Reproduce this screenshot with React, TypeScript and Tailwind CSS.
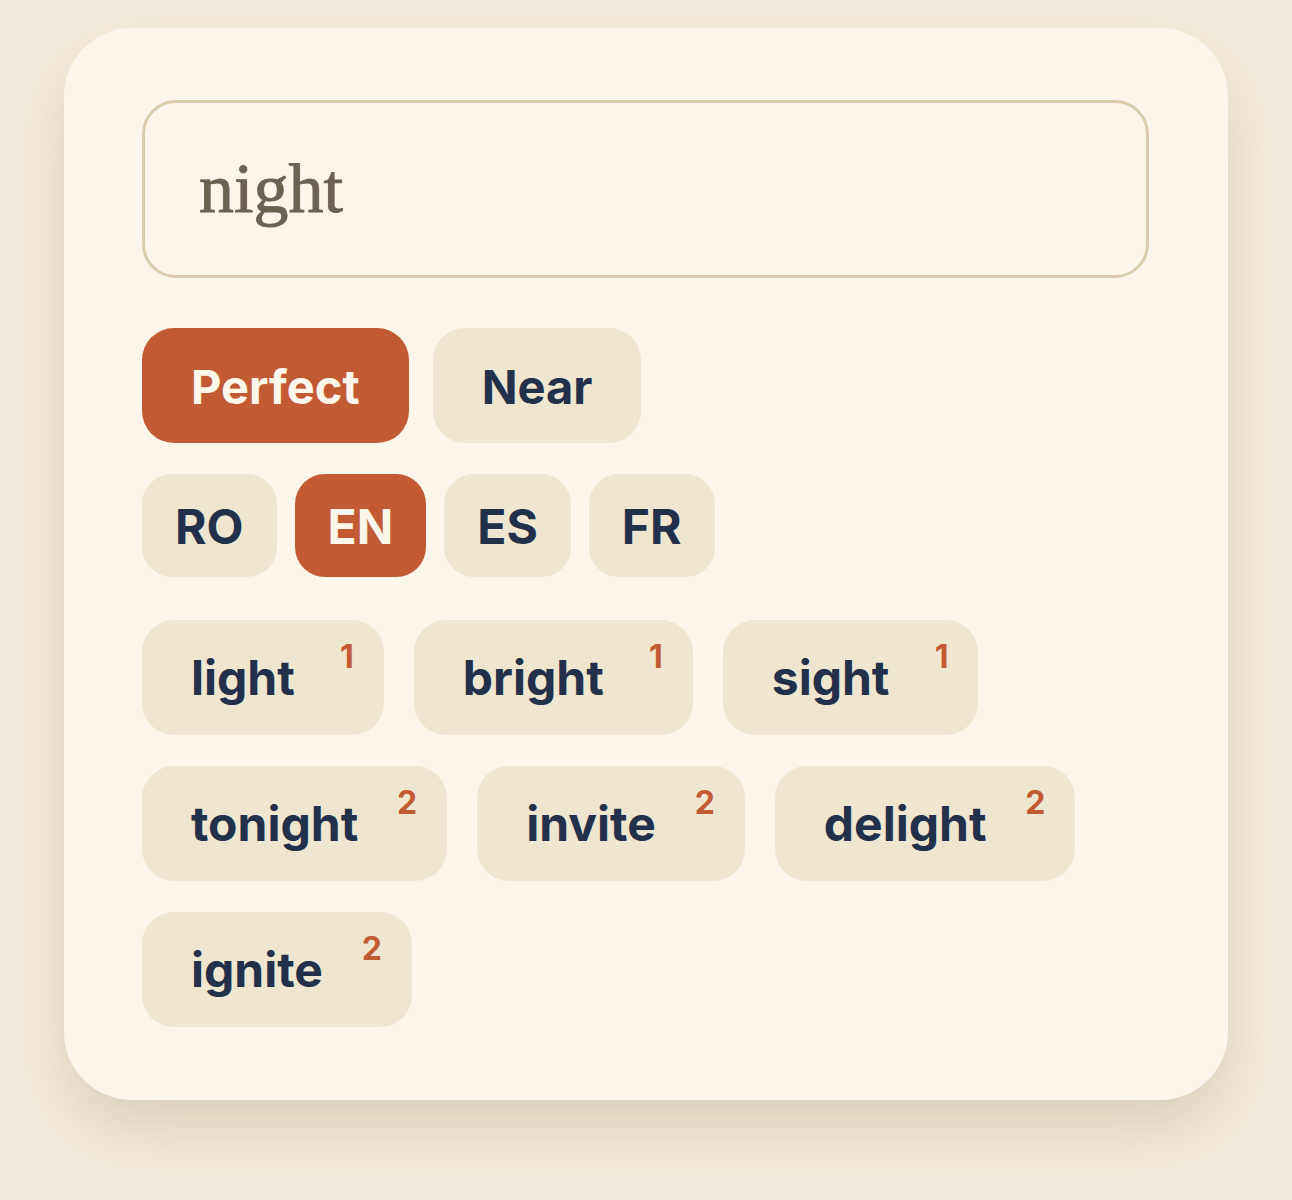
import React from "react";

const sans = { fontFamily: "Inter, 'Noto Sans', sans-serif" };

function Chip({ word, n }: { word: string; n: number }) {
  return (
    <div className="relative flex h-[115px] items-start rounded-[32px] bg-[#efe6d0] pl-[49px] pr-[89px]">
      <span className="mt-[28px] text-[48px] font-bold leading-[60px] text-[#22304b]">{word}</span>
      <span className="absolute right-[30px] top-[17px] text-[32px] font-bold leading-[40px] text-[#c25a34]">{n}</span>
    </div>
  );
}

export default function App() {
  const langs = ["RO", "EN", "ES", "FR"];
  return (
    <div className="min-h-[1200px] w-full bg-[#f3ebd9] pt-[28px]" style={sans}>
      <div className="ml-[64px] w-[1164px] rounded-[68px] bg-[#fcf5ea] px-[78px] pb-[73px] pt-[72px] shadow-[0_30px_60px_-6px_rgba(90,70,30,0.18)]">
        <div className="flex h-[178px] w-[1007px] items-center rounded-[34px] border-[3px] border-[#d9cdab] bg-[#fcf5ea] pl-[54px]">
          <span
            className="leading-none text-[#6b6252] [-webkit-text-stroke:0.9px_#6b6252]"
            style={{ fontFamily: "'Liberation Serif', 'DejaVu Serif', serif", fontSize: 70 }}
          >
            night
          </span>
        </div>

        <div className="mt-[50px] flex gap-[24px]">
          <div className="flex h-[115px] items-center rounded-[32px] bg-[#c25a34] px-[49px] pt-[3px] text-[47px] font-bold text-[#fdf6ea]">
            Perfect
          </div>
          <div className="flex h-[115px] items-center rounded-[32px] bg-[#efe6d0] px-[49px] pt-[3px] text-[47px] font-bold text-[#22304b]">
            Near
          </div>
        </div>

        <div className="mt-[31px] flex gap-[18px]">
          {langs.map((l) => (
            <div
              key={l}
              className={
                l === "EN"
                  ? "flex h-[103px] items-center rounded-[30px] bg-[#c25a34] px-[33px] pt-[3px] text-[48px] font-bold text-[#fdf6ea]"
                  : "flex h-[103px] items-center rounded-[30px] bg-[#efe6d0] px-[33px] pt-[3px] text-[48px] font-bold text-[#22304b]"
              }
            >
              {l}
            </div>
          ))}
        </div>

        <div className="mt-[43px] flex flex-col gap-[31px]">
          <div className="flex gap-[30px]">
            <Chip word="light" n={1} />
            <Chip word="bright" n={1} />
            <Chip word="sight" n={1} />
          </div>
          <div className="flex gap-[30px]">
            <Chip word="tonight" n={2} />
            <Chip word="invite" n={2} />
            <Chip word="delight" n={2} />
          </div>
          <div className="flex gap-[30px]">
            <Chip word="ignite" n={2} />
          </div>
        </div>
      </div>
    </div>
  );
}
